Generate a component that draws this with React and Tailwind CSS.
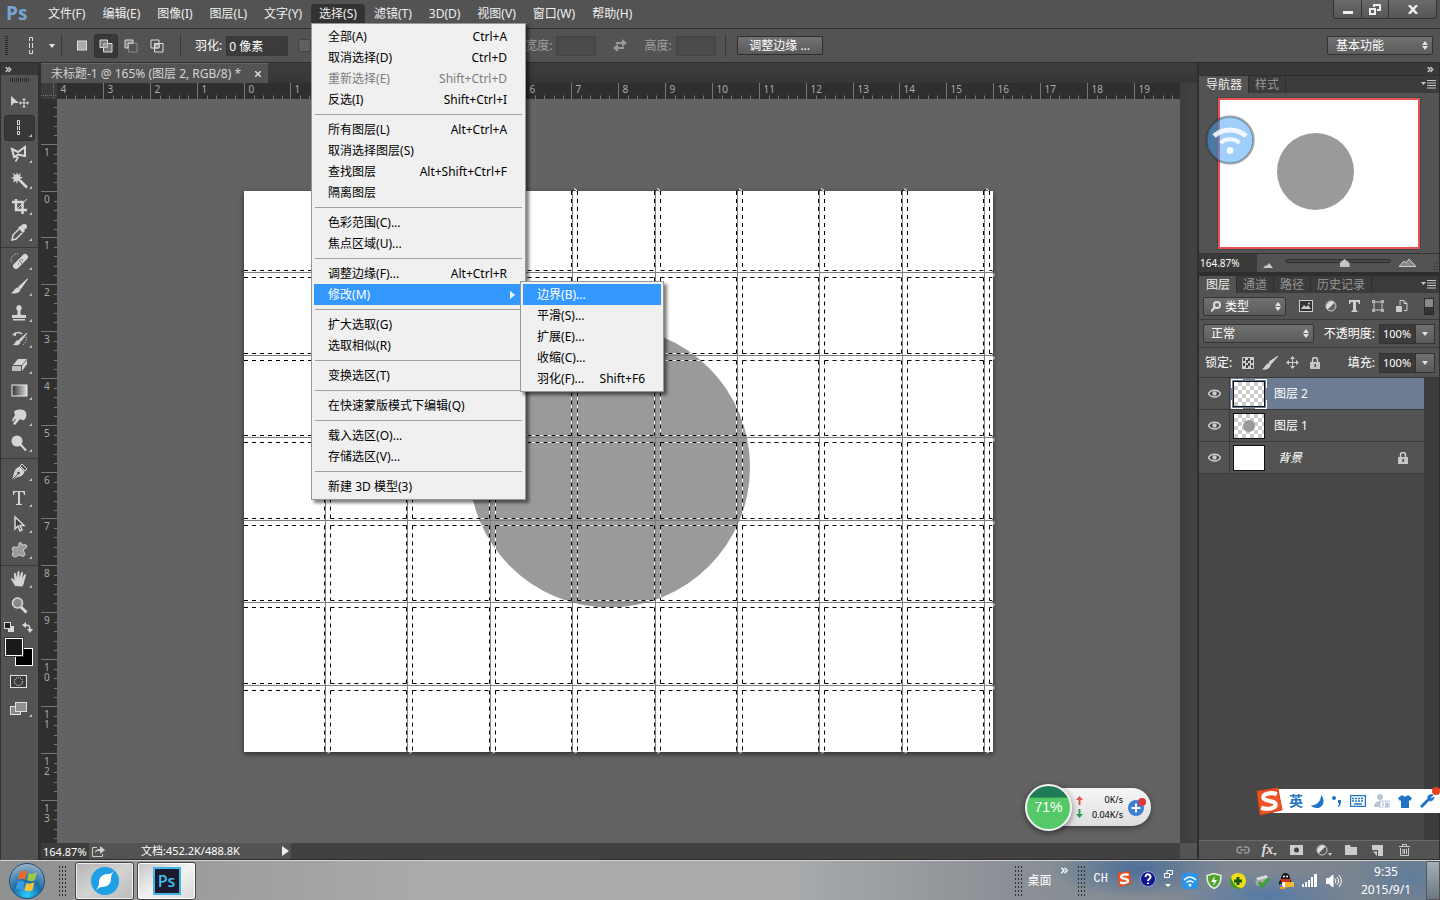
import { useState } from "react";
import { ChevronsRight } from "lucide-react";

const MENUS = ["文件(F)", "编辑(E)", "图像(I)", "图层(L)", "文字(Y)", "选择(S)", "滤镜(T)", "3D(D)", "视图(V)", "窗口(W)", "帮助(H)"];

const SELECT_MENU = [
  [
    { label: "全部(A)", keys: "Ctrl+A" },
    { label: "取消选择(D)", keys: "Ctrl+D" },
    { label: "重新选择(E)", keys: "Shift+Ctrl+D", disabled: true },
    { label: "反选(I)", keys: "Shift+Ctrl+I" },
  ],
  [
    { label: "所有图层(L)", keys: "Alt+Ctrl+A" },
    { label: "取消选择图层(S)" },
    { label: "查找图层", keys: "Alt+Shift+Ctrl+F" },
    { label: "隔离图层" },
  ],
  [{ label: "色彩范围(C)..." }, { label: "焦点区域(U)..." }],
  [
    { label: "调整边缘(F)...", keys: "Alt+Ctrl+R" },
    {
      label: "修改(M)",
      children: [
        { label: "边界(B)...", active: true },
        { label: "平滑(S)..." },
        { label: "扩展(E)..." },
        { label: "收缩(C)..." },
        { label: "羽化(F)...", keys: "Shift+F6" },
      ],
    },
  ],
  [{ label: "扩大选取(G)" }, { label: "选取相似(R)" }],
  [{ label: "变换选区(T)" }],
  [{ label: "在快速蒙版模式下编辑(Q)" }],
  [{ label: "载入选区(O)..." }, { label: "存储选区(V)..." }],
  [{ label: "新建 3D 模型(3)" }],
];

// tool glyphs are drawn on an 18x18 grid
const TOOLS = [
  [
    { name: "移动", plain: true, art: <><path d="M1 3v10l3-3h5z" /><path d="M14 6v8M10 10h8" stroke="currentColor" /><path d="M14 5l2 2h-4zM14 15l2-2h-4zM9 10l2-2v4zM19 10l-2-2v4z" /></> },
    { name: "单列选框", active: true, art: <path d="M7.500 1.500h2v4h-2zM7.500 7v4M9.500 7v4M7.500 12.500h2v3h-2z" fill="none" stroke="currentColor" /> },
    { name: "多边形套索", art: <><path d="M2 4l6 3 7-5v9l-7-1.500-4 2.500z" fill="none" stroke="currentColor" strokeWidth="2" /><path d="M4 11.500l4 1-2.500 4" fill="none" stroke="currentColor" strokeWidth="1.500" /></> },
    { name: "魔棒", art: <><path d="M7 1l1 3 3-2-1 3.500 3 1-3 1.500 1 3-3-1.500L7 13l-1-3-3 1.500 1-3.500-3-1 3-1.500L3 2l3 2z" /><path d="M10 9.500l7 7" stroke="currentColor" strokeWidth="2.500" /></> },
    { name: "裁剪", art: <><path d="M6 2v11h11M2 5h10.500v12" fill="none" stroke="currentColor" strokeWidth="2.500" /><path d="M6 13L17 2" stroke="currentColor" /></> },
    { name: "吸管", art: <><path d="M11 3c2-3 6-2 6 0s-1 3-3 4l1 1-2 2-5-5 2-2z" /><path d="M9 6L3 12l-1 5 4-1 6-6" fill="none" stroke="currentColor" strokeWidth="1.500" /></> },
  ],
  [
    { name: "污点修复画笔", art: <><path d="M6 14l9-9" stroke="currentColor" strokeWidth="6" strokeLinecap="round" /><path d="M8 12h1M10 10h1M12 8h1M9 9h1M11 11h1M10.500 7.500h1" stroke="#555" /><path d="M8 2a6 6 0 0 0-6 9" fill="none" stroke="currentColor" strokeDasharray="1 1" /></> },
    { name: "画笔", art: <><path d="M17.500 1l-7 10-2-2z" stroke="currentColor" /><path d="M8 9.500c3 1 3 3 1 4.500-2 1.500-5 2-8 1 3-1 3-5 7-5.500z" /></> },
    { name: "仿制图章", art: <path d="M9 1a3 3 0 0 1 2 5c-1 1-.5 4 0 5h5v3H2v-3h5c.5-1 1-4 0-5a3 3 0 0 1 2-5zM3 15h12v1.500H3z" /> },
    { name: "历史记录画笔", art: <><path d="M17 3l-6 8-2-1z" stroke="currentColor" /><path d="M8 10c3 1 3 3 1 4.500-2 1-4 1-6 .5 2-1 2-4 5-5z" /><path d="M4 4c3-2 6-2 8 0" fill="none" stroke="currentColor" strokeWidth="1.500" /><path d="M2 5l4-3v4z" /><path d="M16 7c1 4-1 7-4 8" fill="none" stroke="currentColor" strokeDasharray="1 1.500" /></> },
    { name: "橡皮擦", art: <><path d="M8 3h9l-5 6H3z" /><path d="M2 10h9v5H2z" fill="#bdbdbd" /><path d="M12 10l5-6v4l-5 7z" /></> },
    { name: "渐变", art: <rect x="2" y="3" width="15" height="11" fill="url(#toolGradient)" stroke="#eee" /> },
    { name: "涂抹", art: <path d="M4 4c2-3 8-3 11-1 2 2 2 7-1 9-1 .5-3 0-4-1l-5 6-2-1 3-5-1 0-2 3-1-2 3-5z" /> },
    { name: "减淡", art: <><circle cx="7" cy="7" r="5.500" /><path d="M10.500 10.500l5.500 6" stroke="currentColor" strokeWidth="2" /></> },
  ],
  [
    { name: "钢笔", art: <><path d="M12 1l5 5-2 2-5-5z" fill="none" stroke="currentColor" /><path d="M9.500 3.500l5 5c-1 4-4 5-8 6L2 17 3.500 12C4.500 8 5.500 5 9.500 3.500z" /><path d="M2.500 16.500L8 11" stroke="#444" /><circle cx="8.500" cy="10" r="1.300" fill="#444" /></> },
    { name: "横排文字", art: <path d="M3 2h12v4h-1c0-2-1-3-2-3h-2v11c0 1 1 1 2 1v1H6v-1c1 0 2 0 2-1V3H6C5 3 4 4 4 6H3z" /> },
    { name: "路径选择", art: <path d="M5 2v12l3-3 2 5 2-1-2-4.500h4z" fill="#3a3a3a" stroke="currentColor" strokeWidth="1.500" /> },
    { name: "自定形状", art: <path d="M9 2c2-1 3 0 3 2 2 0 4-1 5 1 0 2-3 3-4 4 1 2 3 4 1 6-2 1-3-1-5-1-2 1-4 3-6 1s1-4 0-5c-1-2-1-4 1-4s4 1 5-1z" fill="#9a9a9a" stroke="currentColor" /> },
  ],
  [
    { name: "抓手", art: <path d="M5 16c-1-2-3-5-4-7 0-1 2-1 3 1l.5.500L4 4c0-1.500 2-1.500 2 0l1 4L7.500 2c0-1.500 2-1.500 2 0v6l1.500-5c.5-1.500 2-1 2 .5L12 9l2-4c.5-1 2-1 2 .5L14 12c0 2-1 3-1.500 4.500z" /> },
    { name: "缩放", plain: true, art: <><circle cx="7.500" cy="7" r="5" fill="#8a8a8a" stroke="currentColor" strokeWidth="1.500" /><path d="M11 11l5.500 5.500" stroke="currentColor" strokeWidth="3" /></> },
  ],
];

const LAYERS = [
  { name: "图层 2", kind: "empty" },
  { name: "图层 1", kind: "circle" },
  { name: "背景", kind: "white", locked: true },
];

const UNIT = 46.85; // one centimetre at the current zoom

function ToolButton({ tool }) {
  return (
    <button
      aria-label={tool.name}
      className={`mx-[3px] block h-[26px] w-[31px] rounded-[3px] ${tool.active ? "border border-[#303030] bg-[#383838]" : "border border-transparent"}`}
    >
      <svg width="29" height="24" viewBox="0 0 29 24" fill="#d4d4d4" className="text-[#d8d8d8]">
        <g transform="translate(5 3)">{tool.art}</g>
        {!tool.plain && <path d="M27 18v3h-3z" fill="#c0c0c0" />}
      </svg>
    </button>
  );
}

function Toolbar() {
  return (
    <aside className="flex w-[41px] shrink-0 flex-col border-l border-r-[3px] border-l-[#303030] border-r-[#2f2f2f] bg-[#535353]">
      <div className="flex h-3 shrink-0 items-center bg-[#383838] pl-[3px] text-[#c8c8c8]">
        <ChevronsRight size={9} strokeWidth={4} />
      </div>
      <div className="mx-auto mt-[3px] mb-[7px] h-1 w-5 shrink-0 bg-[repeating-linear-gradient(90deg,#2c2c2c_0_1px,transparent_1px_2px)]" />
      <svg width="0" height="0" className="absolute">
        <linearGradient id="toolGradient">
          <stop offset="0" stopColor="#333" />
          <stop offset="1" stopColor="#ddd" />
        </linearGradient>
      </svg>
      {TOOLS.map((group, i) => (
        <div key={i} className={i > 0 ? "mx-auto mt-[2px] border-t border-[#3a3a3a]" : "mx-auto"}>
          {group.map((tool) => (
            <ToolButton key={tool.name} tool={tool} />
          ))}
        </div>
      ))}
      <div className="flex items-center justify-between px-[3px] pt-1">
        <button aria-label="默认前景色和背景色">
          <svg width="11" height="11" viewBox="0 0 11 11">
            <rect x="4" y="4" width="6" height="6" fill="#d8d8d8" />
            <rect x="0.500" y="0.500" width="6" height="6" fill="#222" stroke="#d8d8d8" />
          </svg>
        </button>
        <button aria-label="切换前景色和背景色" className="mr-[2px]">
          <svg width="11" height="11" viewBox="0 0 11 11" fill="#d8d8d8">
            <path d="M3 3c4 0 5 1 5 5" fill="none" stroke="#d8d8d8" strokeWidth="1.500" />
            <path d="M0 3l4-3v6zM8 11L5 7h6z" />
          </svg>
        </button>
      </div>
      <button aria-label="前景色和背景色" className="mx-[3px] mt-1">
        <svg width="31" height="30" viewBox="0 0 31 30">
          <rect x="11.500" y="11.500" width="17" height="17" fill="#000" stroke="#fff" />
          <rect x="0" y="0" width="20" height="20" fill="#333" />
          <rect x="1.500" y="1.500" width="17" height="17" fill="#1a1a1a" stroke="#fff" />
        </svg>
      </button>
      <button aria-label="以快速蒙版模式编辑" className="mt-2 ml-[9px] self-start">
        <svg width="17" height="13" viewBox="0 0 17 13">
          <rect x="0.500" y="0.500" width="16" height="12" fill="#3c3c3c" stroke="#e0e0e0" />
          <circle cx="8.500" cy="6.500" r="4" fill="none" stroke="#fff" strokeDasharray="1 1" />
        </svg>
      </button>
      <button aria-label="更改屏幕模式" className="mt-[14px] ml-[9px] self-start">
        <svg width="23" height="16" viewBox="0 0 23 16">
          <rect x="0.500" y="4.500" width="10" height="8" fill="#888" stroke="#e0e0e0" />
          <rect x="5.500" y="0.500" width="11" height="9" fill="#909090" stroke="#e0e0e0" />
          <path d="M22 12v3h-3z" fill="#c0c0c0" />
        </svg>
      </button>
    </aside>
  );
}

function MenuRow({ item }) {
  const highlighted = item.active || item.children;
  return (
    <li className="relative">
      <button
        disabled={item.disabled}
        className={`flex h-[21px] w-full items-center justify-between pr-4 pl-[14px] whitespace-nowrap ${
          highlighted ? "bg-[#3399ff] text-white" : item.disabled ? "text-[#7c7c7c]" : "text-black"
        }`}
      >
        <span>{item.label}</span>
        {item.keys && <span>{item.keys}</span>}
        {item.children && (
          <svg width="5" height="8" viewBox="0 0 5 8" className="-mr-2"><path d="M0 0l5 4-5 4z" fill="#fff" /></svg>
        )}
      </button>
      {item.children && (
        <ul className="absolute -top-[3px] left-[206px] z-10 w-36 border border-[#979797] bg-[#f0f0f0] p-[2px] shadow-[3px_3px_3px_rgba(0,0,0,0.5)]">
          {item.children.map((child) => (
            <MenuRow key={child.label} item={child} />
          ))}
        </ul>
      )}
    </li>
  );
}

function SelectMenu() {
  return (
    <div className="absolute top-[19px] left-0 z-20 w-[215px] border border-[#979797] bg-[#f0f0f0] p-[2px] shadow-[3px_3px_3px_rgba(0,0,0,0.5)]">
      {SELECT_MENU.map((group, i) => (
        <ul key={i} className={i > 0 ? "before:mx-px before:my-1 before:block before:h-px before:bg-[#a0a0a0]" : ""}>
          {group.map((item) => (
            <MenuRow key={item.label} item={item} />
          ))}
        </ul>
      ))}
    </div>
  );
}

function MenuBar() {
  return (
    <header className="flex h-[29px] shrink-0 items-start border-b border-[#2e2e2e] bg-[#535353] text-[12px] text-[#f0f0f0]">
      <div className="w-10 pl-[6px] font-['Open_Sans',sans-serif] text-[19px] leading-[26px] font-bold text-[#78a5d6]">Ps</div>
      <nav className="flex gap-px pt-1">
        {MENUS.map((name) => (
          <div key={name} className="relative">
            <button className={`h-[19px] px-2 leading-[19px] whitespace-nowrap ${name === "选择(S)" ? "rounded-t-[3px] bg-[#333]" : ""}`}>{name}</button>
            {name === "选择(S)" && <SelectMenu />}
          </div>
        ))}
      </nav>
      <div className="mr-[3px] ml-auto flex h-[19px] divide-x divide-[#333] rounded-b-[3px] border border-t-0 border-[#333] bg-linear-to-b from-[#6a6a6a] to-[#565656]">
        <button aria-label="最小化" className="flex w-7 items-center justify-center">
          <svg width="10" height="10"><path d="M0 7h10v3H0z" fill="#eee" /></svg>
        </button>
        <button aria-label="还原" className="flex w-[27px] items-center justify-center">
          <svg width="12" height="11" viewBox="0 0 12 11" fill="none" stroke="#eee" strokeWidth="2">
            <path d="M1 5h5v5H1z" /><path d="M5 3V1h6v5H8" />
          </svg>
        </button>
        <button aria-label="关闭" className="flex w-[47px] items-center justify-center">
          <svg width="10" height="9" viewBox="0 0 10 9"><path d="M1 0l8 9M9 0L1 9" stroke="#eee" strokeWidth="2.500" /></svg>
        </button>
      </div>
    </header>
  );
}

function DropDown({ id, label, value, className, pad = "pl-2" }) {
  return (
    <div className={`relative ${className}`}>
      <label htmlFor={id} className="sr-only">{label}</label>
      <select id={id} className={`block h-[19px] w-full appearance-none rounded-[2px] border border-[#333] bg-linear-to-b from-[#707070] to-[#5c5c5c] ${pad} text-[12px] leading-[17px] text-white outline-0`}>
        <option>{value}</option>
      </select>
      <svg width="6" height="9" viewBox="0 0 6 9" fill="#e4e4e4" className="pointer-events-none absolute top-[5px] right-[5px]">
        <path d="M3 0l3 4H0zM3 9l3-4H0z" />
      </svg>
    </div>
  );
}

function OptionsBar() {
  const divider = <div className="h-[23px] w-px bg-[#3a3a3a]" />;
  return (
    <section className="flex h-[34px] shrink-0 items-center border-b border-[#2e2e2e] bg-[#535353] text-[12px] text-white">
      <div className="ml-[5px] h-[19px] w-[3px] bg-[repeating-linear-gradient(#2c2c2c_0_1px,transparent_1px_2px)]" />
      <button aria-label="工具预设" className="mr-[6px] ml-[21px] flex items-center gap-[15px]">
        <svg width="5" height="17" viewBox="0 0 5 17" fill="none" stroke="#ddd">
          <path d="M.5 4V.5h3V4M.5 6v5M3.500 6v5M.5 13v3.500h3V13" />
        </svg>
        <svg width="6" height="4"><path d="M0 0h6L3 4z" fill="#e4e4e4" /></svg>
      </button>
      {divider}
      <div className="mr-[10px] ml-[7px] flex">
        <button aria-label="新选区" className="flex h-6 w-[25px] items-center justify-center">
          <svg width="12" height="12"><rect x="1.500" y="1" width="9" height="9" fill="#aaa" stroke="#ddd" /></svg>
        </button>
        <button aria-label="添加到选区" className="flex h-6 w-6 items-center justify-center rounded-[3px] border border-[#303030] bg-[#383838]">
          <svg width="14" height="14"><path d="M1 1h7.500v3.500H13V13H4.500V8.500H1z" fill="#777" stroke="#ddd" /><path d="M4.500 8.500v-4h4v4z" fill="#999" stroke="#bbb" /></svg>
        </button>
        <button aria-label="从选区减去" className="flex h-6 w-[26px] items-center justify-center">
          <svg width="14" height="14"><path d="M4.500 4.500H13V13H4.500z" fill="none" stroke="#8a8a8a" /><path d="M1 9V1h8v3H4v5z" fill="#777" stroke="#ddd" /></svg>
        </button>
        <button aria-label="与选区交叉" className="flex h-6 w-[26px] items-center justify-center">
          <svg width="14" height="14" fill="none" stroke="#ddd"><path d="M4.500 4.500H13V13H4.500z" /><path d="M1 1h8v8H1z" /><path d="M5 5h4v4H5z" fill="#888" /></svg>
        </button>
      </div>
      {divider}
      <label htmlFor="feather" className="mr-1 ml-[14px]">羽化:</label>
      <input id="feather" defaultValue="0 像素" className="h-[20px] w-[62px] border border-[#383838] bg-[#3b3b3b] pl-[2px] outline-0" />
      <input type="checkbox" aria-label="消除锯齿" disabled className="ml-[10px] size-[13px] appearance-none rounded-[3px] border border-[#444] bg-[#606060]" />
      <div className="ml-[214px] flex items-center text-[#a0a0a0]">
        <label htmlFor="selWidth">宽度:</label>
        <input id="selWidth" disabled className="ml-1 h-5 w-10 border border-[#434343] bg-[#4b4b4b]" />
        <svg width="14" height="13" viewBox="0 0 14 13" fill="#999" className="mx-[17px]">
          <path d="M3 3h6V0l5 4-5 4V5H3zM11 8H5V5L0 9l5 4v-3h6z" />
        </svg>
        <label htmlFor="selHeight">高度:</label>
        <input id="selHeight" disabled className="ml-1 h-5 w-10 border border-[#434343] bg-[#4b4b4b]" />
      </div>
      <div className="ml-[9px]">{divider}</div>
      <button className="ml-[11px] h-[19px] w-[86px] rounded-[2px] border border-[#2e2e2e] bg-linear-to-b from-[#727272] to-[#5a5a5a] leading-[17px]">调整边缘 ...</button>
      <DropDown id="workspace" label="工作区" value="基本功能" className="mr-[7px] ml-auto w-[106px]" />
    </section>
  );
}

function HorizontalRuler() {
  const zero = 187.5;
  const marks = [];
  for (let k = -4; k < 20; k++) marks.push(k);
  return (
    <svg height="16" className="block min-w-0 flex-1 bg-[#2f2f2f] font-['Noto_Sans',sans-serif] text-[10px]" fill="#aaa">
      {marks.map((k) => {
        const x = Math.round(zero + k * UNIT) - 0.5;
        return (
          <g key={k}>
            <path d={`M${x} 0v16`} stroke="#777" />
            {[1, 2, 3, 4].map((n) => (
              <path key={n} d={`M${Math.round(x + (n * UNIT) / 5) + 0.5} 12.500v3.500`} stroke="#777" />
            ))}
            <text x={x + 4} y="10">{Math.abs(k)}</text>
          </g>
        );
      })}
    </svg>
  );
}

function VerticalRuler() {
  const zero = 92.5;
  const marks = [];
  for (let k = -2; k < 14; k++) marks.push(k);
  return (
    <svg width="16" className="block h-full shrink-0 bg-[#2f2f2f] font-['Noto_Sans',sans-serif] text-[10px]" fill="#aaa">
      {marks.map((k) => {
        const y = Math.round(zero + k * UNIT) - 0.5;
        return (
          <g key={k}>
            {k > -2 && <path d={`M0 ${y}h16`} stroke="#777" />}
            {[1, 2, 3, 4].map((n) => (
              <path key={n} d={`M13 ${Math.round(y + (n * UNIT) / 5) + 0.5}h3`} stroke="#777" />
            ))}
            {k > -2 &&
              String(Math.abs(k)).split("").map((digit, n) => (
                <text key={n} x="3" y={y + 11 + n * 10}>{digit}</text>
              ))}
          </g>
        );
      })}
    </svg>
  );
}

// white page with the grey disc, thin grid lines and the marching ants around every cell
function Artboard() {
  const cols = [0, 1, 2, 3, 4, 5, 6, 7, 8].map((n) => Math.round(81 + n * 82.4));
  const rows = [0, 1, 2, 3, 4, 5].map((n) => Math.round(81 + n * 82.6));
  const xs = [-6, ...cols, 760];
  const ys = [-6, ...rows, 570];
  const cells = [];
  for (let c = 0; c < xs.length - 1; c++) {
    for (let r = 0; r < ys.length - 1; r++) {
      const x = xs[c] + 5.5;
      const y = ys[r] + 5.5;
      cells.push({ x, y, w: xs[c + 1] - 0.5 - x, h: ys[r + 1] - 1.5 - y, right: c === xs.length - 2, left: c === 0, top: r === 0, bottom: r === ys.length - 2 });
    }
  }
  const edges = cells
    .map((s) => {
      let d = "";
      if (!s.left) d += `M${s.x} ${Math.max(s.y, 0)}V${Math.min(s.y + s.h, 561)}`;
      if (!s.right) d += `M${s.x + s.w} ${Math.max(s.y, 0)}V${Math.min(s.y + s.h, 561)}`;
      if (!s.top) d += `M${Math.max(s.x, 0)} ${s.y}H${Math.min(s.x + s.w, 748)}`;
      if (!s.bottom) d += `M${Math.max(s.x, 0)} ${s.y + s.h}H${Math.min(s.x + s.w, 748)}`;
      return d;
    })
    .join("");
  const caps =
    cols.map((x) => `M${x - 0.5} 1l2-3h2l2 3M${x - 0.5} 560l2 2h2l2-2`).join("") +
    rows.map((y) => `M748 ${y - 1.5}l2 2v3l-2 2M0 ${y - 1.5}l-2 1`).join("");
  return (
    <svg width="749" height="561" viewBox="0 0 749 561" className="shrink-0 overflow-visible bg-white shadow-[0_2px_5px_rgba(0,0,0,0.55)]">
      <circle cx="365.500" cy="276" r="140.500" fill="#9c9a98" />
      <path d={edges + caps} fill="none" stroke="#fff" />
      <path d={edges + caps} fill="none" stroke="#000" strokeDasharray="4 4" />
      <path d={cols.map((x) => `M${x + 0.5} 0V561`).join("") + rows.map((y) => `M0 ${y + 0.5}H749`).join("")} stroke="#7d7d7d" />
    </svg>
  );
}

function DocumentArea() {
  return (
    <main className="flex min-w-0 flex-1 flex-col bg-[#3a3a3a]">
      <div className="flex h-5 shrink-0 bg-linear-to-b from-[#3d3d3d] to-[#363636]">
        <div className="flex items-center border-t border-[#666] bg-[#535353] pr-[7px] pl-[10px] text-[12px] whitespace-nowrap text-[#d4d4d4]">
          <span>未标题-1 @ 165% (图层 2, RGB/8) *</span>
          <button aria-label="关闭文档" className="ml-[14px]">
            <svg width="6" height="6"><path d="M0 0l6 6M6 0L0 6" stroke="#ddd" strokeWidth="1.500" /></svg>
          </button>
        </div>
      </div>
      <div className="flex min-h-0 flex-1">
        <div className="flex min-w-0 flex-1 flex-col">
          <div className="flex h-4 shrink-0">
            <svg width="16" height="16" className="shrink-0 bg-[#3c3c3c]"><path d="M12.500 0v16M0 12.500h16" stroke="#777" strokeDasharray="1 1" /></svg>
            <HorizontalRuler />
          </div>
          <div className="flex min-h-0 flex-1">
            <VerticalRuler />
            <div className="flex min-w-0 flex-1 items-center justify-center overflow-hidden bg-[#636363]">
              <Artboard />
            </div>
          </div>
        </div>
        <div className="w-[17px] shrink-0 bg-linear-to-r from-[#3c3c3c] to-[#434343]" />
      </div>
      <footer className="flex h-[17px] shrink-0 items-center border-b border-[#2e2e2e] bg-[#414141] text-[11px] text-white">
        <input aria-label="缩放比例" defaultValue="164.87%" className="h-full w-12 bg-[#3c3c3c] pl-[2px] text-[11px] outline-0" />
        <div className="flex h-full items-center bg-[#535353] pr-[2px] pl-[3px]">
          <svg width="13" height="12" viewBox="0 0 13 12" fill="none" stroke="#ccc">
            <path d="M5 2.500H.5v9h10V9" /><path d="M3 8c0-3 2-4 5-4V1l5 4-5 4V6C6 6 4 6 3 8z" fill="#ccc" stroke="none" />
          </svg>
          <span className="ml-9 w-[141px] text-[11px] whitespace-nowrap">文档:452.2K/488.8K</span>
          <button aria-label="状态信息"><svg width="7" height="10"><path d="M0 0l7 5-7 5z" fill="#eee" /></svg></button>
        </div>
        <div className="ml-auto h-full w-[17px] bg-[#535353]" />
      </footer>
    </main>
  );
}

function PanelTabs({ tabs }) {
  return (
    <div className="flex h-[18px] shrink-0 border-t border-[#2e2e2e] bg-[#3b3b3b] text-[12px] leading-[17px]">
      {tabs.map((tab, i) => (
        <button key={tab} className={`border-r border-[#2e2e2e] px-[6px] ${i === 0 ? "bg-[#535353] pl-[7px] text-[#eee]" : "text-[#969696]"}`}>{tab}</button>
      ))}
      <button aria-label="面板菜单" className="mr-[3px] ml-auto">
        <svg width="15" height="9" viewBox="0 0 15 9" fill="#c8c8c8"><path d="M0 2h5L2.500 5zM6 0h9v1H6zM6 2.500h9v1H6zM6 5h9v1H6zM6 7.500h9v1H6z" /></svg>
      </button>
    </div>
  );
}

function Navigator() {
  return (
    <section>
      <PanelTabs tabs={["导航器", "样式"]} />
      <div className="relative flex h-[161px] items-center justify-center border-b border-[#333] bg-[#535353]">
        <svg width="202" height="151" viewBox="0 0 202 151" className="bg-white shadow-[0_0_0_1px_#454545]">
          <circle cx="97.500" cy="73.500" r="38.500" fill="#9c9a98" />
          <rect x="1" y="1" width="200" height="149" fill="none" stroke="#e85252" strokeWidth="2" />
        </svg>
        {/* shared wifi bubble floating over the panel */}
        <svg width="50" height="50" viewBox="0 0 50 50" className="absolute top-[22px] left-[6px]">
          <circle cx="25" cy="25" r="23.500" fill="#3f9ff5" fillOpacity="0.5" stroke="#222" strokeOpacity="0.350" strokeWidth="2.500" />
          <g fill="none" stroke="#fff" strokeOpacity="0.850" strokeWidth="4">
            <path d="M9 21c9-8 23-8 32 0" strokeWidth="5" /><path d="M15.500 28c5-5 14-5 19 0" />
          </g>
          <circle cx="25" cy="35.500" r="3.500" fill="#fff" fillOpacity="0.9" />
        </svg>
      </div>
      <div className="flex h-[18px] items-center bg-[#535353]">
        <input aria-label="导航器缩放" defaultValue="164.87%" className="h-full w-[58px] bg-[#3a3a3a] pl-px text-[10px] text-white outline-0" />
        <svg width="10" height="5" viewBox="0 0 10 5" className="mt-1 ml-[6px]"><path d="M0 5l3-3 1 1 2-3 4 5z" fill="#ccc" /></svg>
        <input
          type="range"
          aria-label="缩放滑块"
          defaultValue="57"
          className="-mt-1 ml-[12px] h-1 w-[106px] appearance-none rounded-full border border-[#303030] bg-[#484848] [&::-webkit-slider-thumb]:mt-1 [&::-webkit-slider-thumb]:h-2 [&::-webkit-slider-thumb]:w-[10px] [&::-webkit-slider-thumb]:appearance-none [&::-webkit-slider-thumb]:bg-[#c4c4c4] [&::-webkit-slider-thumb]:[clip-path:polygon(50%_0,100%_50%,100%_100%,0_100%,0_50%)]"
        />
        <svg width="17" height="8" viewBox="0 0 17 8" className="ml-2"><path d="M0 7.500L5 2l2 2 3-4 7 7.500z" fill="#888" stroke="#ccc" /></svg>
        <svg width="9" height="9" viewBox="0 0 9 9" className="mr-px ml-auto mt-2"><path d="M8 0v9M5.500 3v6M3 6v3" stroke="#222" strokeDasharray="1 2" /></svg>
      </div>
    </section>
  );
}

function PercentField({ id, label }) {
  return (
    <div className="ml-auto flex items-center">
      <label htmlFor={id} className="mr-1 text-[12px] whitespace-nowrap">{label}:</label>
      <input id={id} defaultValue="100%" className="h-5 w-[37px] border border-[#333] bg-[#3b3b3b] pl-[3px] text-[11px] outline-0" />
      <button aria-label={`${label}滑块`} className="flex h-5 w-[19px] items-center justify-center border border-l-0 border-[#333] bg-linear-to-b from-[#707070] to-[#5a5a5a]">
        <svg width="6" height="4"><path d="M0 0h6L3 4z" fill="#e4e4e4" /></svg>
      </button>
    </div>
  );
}

function LockIcon() {
  return (
    <svg width="10" height="12" viewBox="0 0 10 12">
      <path d="M2.500 5V3a2.500 2.500 0 0 1 5 0v2" fill="none" stroke="#d0d0d0" strokeWidth="1.500" />
      <path d="M0 5h10v7H0z" fill="#c4c4c4" />
      <path d="M4.500 7h1.500v3H4.500z" fill="#444" />
    </svg>
  );
}

function LayerThumb({ kind, selected }) {
  return (
    <span className="relative mr-[9px] ml-[3px] block h-[26px] w-[32px] border border-[#111] bg-white">
      {kind !== "white" && <span className="block h-full w-full bg-[conic-gradient(#ccc_25%,#fff_0_50%,#ccc_0_75%,#fff_0)] bg-[length:8px_8px]" />}
      {kind === "circle" && (
        <svg width="12" height="12" className="absolute top-[6px] left-[9px]"><circle cx="6" cy="6" r="6" fill="#9c9a98" /></svg>
      )}
      {selected && (
        <svg width="36" height="30" viewBox="0 0 36 30" fill="none" stroke="#fff" className="absolute -top-[3px] -left-[3px]">
          <path d="M.5 9V.5H12M24 .5h11.500V9M35.500 21v8.500H24M12 29.500H.5V21" />
        </svg>
      )}
    </span>
  );
}

const PanelButton = ({ label, children }) => (
  <button aria-label={label} className="flex w-[27px] items-center justify-center">{children}</button>
);

function Layers() {
  const [selected, setSelected] = useState("图层 2");
  const rule = "border-b border-[#3a3a3a]";
  return (
    <section className="flex min-h-0 flex-1 flex-col border-t-[3px] border-[#2e2e2e] bg-[#474747] text-white">
      <PanelTabs tabs={["图层", "通道", "路径", "历史记录"]} />
      <div className={`flex h-[27px] shrink-0 items-center bg-[#535353] pr-[5px] pl-1 ${rule}`}>
        <div className="relative w-[83px]">
          <DropDown id="filter" label="滤镜类型" value="类型" className="w-full" pad="pl-[21px]" />
          <svg width="10" height="11" viewBox="0 0 10 11" fill="none" stroke="#ddd" strokeWidth="2" className="pointer-events-none absolute top-1 left-2">
            <circle cx="6" cy="4" r="3" /><path d="M3.500 6.500L0 10.500" />
          </svg>
        </div>
        <div className="ml-[13px] flex items-center gap-3">
          <button aria-label="像素图层"><svg width="14" height="12" viewBox="0 0 14 12"><rect x="0.500" y="0.500" width="13" height="11" fill="#333" stroke="#ccc" /><path d="M2 9l3-4 2 2 2-2 3 4z" fill="#ccc" /><circle cx="10" cy="3.500" r="1" fill="#ccc" /></svg></button>
          <button aria-label="调整图层"><svg width="12" height="12" viewBox="0 0 12 12"><circle cx="6" cy="6" r="5" fill="#666" stroke="#ccc" /><path d="M9.500 2.500A5 5 0 0 0 2.500 9.500z" fill="#ddd" /></svg></button>
          <button aria-label="文字图层"><svg width="11" height="12" viewBox="0 0 11 12" fill="#d0d0d0"><path d="M0 0h11v4h-1L9 2H7v8l1.500 1v1h-6v-1L4 10V2H2L1 4H0z" /></svg></button>
          <button aria-label="形状图层"><svg width="12" height="12" viewBox="0 0 12 12" fill="none" stroke="#ccc"><path d="M2 2h8v8H2z" /><path d="M.5.500h2v2h-2zM9.500.500h2v2h-2zM.5 9.500h2v2h-2zM9.500 9.500h2v2h-2z" fill="#535353" /></svg></button>
          <button aria-label="智能对象"><svg width="12" height="12" viewBox="0 0 12 12" fill="none" stroke="#ccc"><path d="M4 5V.5h4l3 3v7H8M8 .5v3h3" /><path d="M.5 6.500h5v5h-5z" fill="#ccc" /></svg></button>
        </div>
        <button aria-label="图层过滤开关" className="ml-auto h-[17px] w-[10px] border border-[#2c2c2c] bg-linear-to-b from-[#8a8a8a] from-50% to-[#333] to-50%" />
      </div>
      <div className={`flex h-7 shrink-0 items-center bg-[#535353] pr-1 pl-1 ${rule}`}>
        <DropDown id="blend" label="混合模式" value="正常" className="w-[111px]" pad="pl-[7px]" />
        <PercentField id="opacity" label="不透明度" />
      </div>
      <div className={`flex h-[30px] shrink-0 items-center bg-[#535353] pr-1 pl-[6px] text-[12px] ${rule}`}>
        <span>锁定:</span>
        <div className="ml-[10px] flex items-center gap-2">
          <button aria-label="锁定透明像素" className="size-[12px] border border-[#ccc] bg-[conic-gradient(#ccc_25%,#444_0_50%,#ccc_0_75%,#444_0)] bg-[length:5px_5px]" />
          <button aria-label="锁定图像像素"><svg width="16" height="14" viewBox="0 0 16 14" fill="#d0d0d0"><path d="M16 0L9 8 7 6z" stroke="#d0d0d0" /><path d="M7 7c3 1 2 3 0 5s-5 2-7 1c3-1 3-5 7-6z" /></svg></button>
          <button aria-label="锁定位置"><svg width="13" height="13" viewBox="0 0 13 13" fill="#ccc"><path d="M6.500 1v11M1 6.500h11" stroke="#ccc" /><path d="M6.500 0L9 3H4zM6.500 13L9 10H4zM0 6.500L3 4v5zM13 6.500L10 4v5z" /></svg></button>
          <button aria-label="锁定全部" className="ml-[3px]"><LockIcon /></button>
        </div>
        <PercentField id="fill" label="填充" />
      </div>
      <div className="flex min-h-0 flex-1">
        <ul className="flex-1">
          {LAYERS.map((layer) => {
            const isSelected = layer.name === selected;
            return (
              <li key={layer.name} className={`flex h-8 bg-[#535353] ${rule}`}>
                <button aria-label={`显示 ${layer.name}`} className="flex w-[31px] items-center justify-center border-r border-[#3a3a3a]">
                  <svg width="13" height="9" viewBox="0 0 13 9">
                    <path d="M.5 4.500C3 0 10 0 12.500 4.500 10 9 3 9 .5 4.500z" fill="#3f3f3f" stroke="#ccc" strokeWidth="1.500" />
                    <circle cx="6.500" cy="4.500" r="2.200" fill="#ccc" />
                  </svg>
                </button>
                <button
                  onClick={() => setSelected(layer.name)}
                  className={`flex flex-1 items-center pr-4 text-[12px] ${isSelected ? "bg-[#6d7c93]" : ""}`}
                >
                  <LayerThumb kind={layer.kind} selected={isSelected} />
                  <span className={layer.locked ? "mr-auto pl-1 italic" : "mr-auto"}>{layer.name}</span>
                  {layer.locked && <LockIcon />}
                </button>
              </li>
            );
          })}
        </ul>
        <div className="w-[15px] shrink-0 bg-[#3c3c3c]" />
      </div>
      <div className="flex h-5 shrink-0 items-center justify-end border-t border-b border-t-[#6a6a6a] border-b-[#2e2e2e] bg-[#535353] pr-[21px]">
        <PanelButton label="链接图层"><svg width="14" height="8" viewBox="0 0 14 8" fill="none" stroke="#999" strokeWidth="1.500"><path d="M6 1H4a3 3 0 0 0 0 6h2M8 1h2a3 3 0 0 1 0 6H8M4 4h6" /></svg></PanelButton>
        <PanelButton label="图层样式"><span className="font-['Liberation_Serif',serif] text-[14px] leading-[14px] font-bold text-[#ddd] italic">fx</span><svg width="4" height="3" className="mt-2"><path d="M0 0h4L2 3z" fill="#ccc" /></svg></PanelButton>
        <PanelButton label="添加蒙版"><svg width="13" height="10"><path d="M0 0h13v10H0z" fill="#ccc" /><circle cx="6.500" cy="5" r="2.500" fill="#444" /></svg></PanelButton>
        <PanelButton label="新建调整图层"><svg width="12" height="12" viewBox="0 0 12 12"><circle cx="6" cy="6" r="5" fill="#555" stroke="#ccc" /><path d="M9.500 2.500A5 5 0 0 0 2.500 9.500z" fill="#ddd" /></svg><svg width="4" height="3" className="mt-2"><path d="M0 0h4L2 3z" fill="#ccc" /></svg></PanelButton>
        <PanelButton label="新建组"><svg width="12" height="10"><path d="M0 0h5l1 2h6v8H0z" fill="#ccc" /></svg></PanelButton>
        <PanelButton label="新建图层"><svg width="11" height="11"><path d="M0 0h11v11H6V5H0z" fill="#ccc" /><path d="M1 6.500h4V11z" fill="#ccc" /></svg></PanelButton>
        <PanelButton label="删除图层"><svg width="11" height="12" viewBox="0 0 11 12" fill="none" stroke="#ccc"><path d="M0 2.500h11M3.500 2V.5h4V2M1.500 4v7.500h8V4M4 5v5M5.500 5v5M7.500 5v5" /></svg></PanelButton>
      </div>
    </section>
  );
}

function NetSpeed() {
  return (
    <div className="absolute right-[289px] bottom-[70px] flex h-[46px] w-[126px] items-center">
      <div className="ml-6 flex h-[38px] flex-1 items-center rounded-r-full bg-linear-to-b from-[#f6f6f6] to-[#dedede] pr-[5px] pl-[27px] text-[9px] leading-[15px] text-black shadow-[0_2px_6px_rgba(0,0,0,0.4)]">
        <svg width="7" height="26" viewBox="0 0 7 26"><path d="M3.500 2l3.500 4H4.500v5h-2V6H0z" fill="#e0524e" /><path d="M3.500 24L0 20h2.500v-5h2v5H7z" fill="#2f9a58" /></svg>
        <div className="ml-auto text-right whitespace-nowrap">
          <p>0K/s</p>
          <p>0.04K/s</p>
        </div>
        <svg width="18" height="20" viewBox="0 0 18 20" className="ml-[5px] shrink-0">
          <circle cx="8" cy="11" r="8" fill="#3c7fd6" /><path d="M8 6.500v9M3.500 11h9" stroke="#fff" strokeWidth="2" /><circle cx="14" cy="5" r="4" fill="#d8383a" />
        </svg>
      </div>
      <div className="absolute top-0 left-0 flex size-[47px] items-center justify-center rounded-full border-2 border-[#f2f2f2] bg-[linear-gradient(#1f7a55_0_26%,#55c968_28%_100%)] font-['Liberation_Sans',sans-serif] text-[14px] text-white shadow-[0_2px_6px_rgba(0,0,0,0.5)]">
        71%
      </div>
    </div>
  );
}

function SogouMark({ size }) {
  return (
    <svg width={size} height={size} viewBox="0 0 28 28">
      <path d="M3 4l20-3 4 21-21 5z" fill="#ee5526" stroke="#d8431a" />
      <path d="M22 7c-5-2-13-1-13 3 0 5 12 2 12 7 0 4-8 5-14 3" fill="none" stroke="#fff" strokeWidth="4" />
    </svg>
  );
}

function ImeBar() {
  return (
    <div className="absolute right-0 bottom-[85px] flex h-7 w-[186px] items-center">
      <div className="z-10 shrink-0"><SogouMark size={29} /></div>
      <div className="-ml-3 flex h-6 flex-1 items-center gap-2 rounded-l-sm bg-white pl-[18px] text-[#1f74c4]">
        <span className="text-[14px] leading-none font-bold">英</span>
        <svg width="13" height="13" viewBox="0 0 13 13" fill="currentColor"><path d="M10 0c5 5 2 13-4 13-3 0-5-1-6-3 6 1 10-4 10-10z" /></svg>
        <svg width="10" height="12" viewBox="0 0 10 12" fill="currentColor"><circle cx="2" cy="3" r="2" /><path d="M6 5h3v3l-2 4H6l1-4H6z" /></svg>
        <svg width="16" height="12" viewBox="0 0 16 12" fill="none" stroke="currentColor"><rect x="0.500" y="0.500" width="15" height="11" strokeWidth="1.500" /><path d="M2 3.500h12M2 6h12" strokeDasharray="2 1" strokeWidth="1.500" /><path d="M4 9h8" strokeWidth="1.500" /></svg>
        <svg width="16" height="14" viewBox="0 0 16 14" fill="#b9c3d6"><circle cx="6" cy="3" r="3" /><path d="M0 13c0-8 12-8 12 0z" /><rect x="6" y="7" width="10" height="7" fill="#fff" stroke="#b9c3d6" /><path d="M9 8.500v4M11 9h3v3.500h-3M11 10.700h3" stroke="#9aa8c4" fill="none" /></svg>
        <svg width="14" height="13" viewBox="0 0 14 13" fill="currentColor"><path d="M4 0c2 2 4 2 6 0l4 3-2 3-1-1v8H3V5L2 6 0 3z" /></svg>
        <svg width="15" height="14" viewBox="0 0 15 14" fill="none" stroke="currentColor"><path d="M1 13l7-7" strokeWidth="3" /><path d="M13 1c-4-1-6 1-5 5 3 2 6 0 6-3l-3 2-1-1z" fill="currentColor" /></svg>
      </div>
      <span className="absolute top-0 right-0 size-2 rounded-full bg-[#e8401c]" />
    </div>
  );
}

function TaskGrip() {
  return <div className="h-8 w-[9px] bg-[radial-gradient(circle,#333_30%,transparent_45%)] bg-[length:3px_4px]" />;
}

function Taskbar() {
  return (
    <footer className="flex h-10 shrink-0 items-center border-t border-[#d4d4d4] bg-[radial-gradient(ellipse_90px_30px_at_79%_20%,#4c6f98,transparent),radial-gradient(ellipse_90px_24px_at_88%_90%,#557aa6,transparent),radial-gradient(ellipse_60px_30px_at_98%_40%,#5f7d9c,transparent),linear-gradient(90deg,#8f9090,#a9abad_30%,#a8aaac_55%,#8b9096_70%,#76818e)] text-white">
      <button aria-label="开始" className="ml-2">
        <svg width="38" height="38" viewBox="0 0 38 38">
          <defs>
            <radialGradient id="orb" cx="0.500" cy="0.900" r="0.900">
              <stop offset="0" stopColor="#2ad0ff" />
              <stop offset="0.450" stopColor="#1b6da8" />
              <stop offset="1" stopColor="#9fb4c6" />
            </radialGradient>
          </defs>
          <circle cx="19" cy="19" r="17.500" fill="url(#orb)" stroke="#1f4b6e" />
          <path d="M12 10c3-2 5-1 7 0l-2 8c-2-1-4-2-7 0z" fill="#f0672a" />
          <path d="M21 11c2 1 5 1 8-1l-2 8c-3 2-6 1-8 0z" fill="#9ccb4a" />
          <path d="M9.500 20c3-2 5-1 7 0l-2 8c-2-1-4-2-7 0z" fill="#3f9be0" />
          <path d="M18.500 21c2 1 5 1 8-1l-2 8c-3 2-6 1-8 0z" fill="#fbc233" />
        </svg>
      </button>
      <div className="ml-3"><TaskGrip /></div>
      <button aria-label="浏览器" className="ml-2 flex h-[38px] w-[59px] items-center justify-center rounded-[3px] border border-[#444] bg-linear-to-br from-[#b4b4b4] via-[#d2d2d2] to-[#bcbcbc] shadow-[inset_0_0_0_1px_#eee]">
        <svg width="28" height="28" viewBox="0 0 28 28"><circle cx="14" cy="14" r="14" fill="#1f9fe6" /><path d="M23 4c-2 3-3 4-3 8 0 5-4 8-9 8-3 0-4 2-6 3 2-3 3-4 3-8 0-5 4-8 9-8 3 0 4-1 6-3z" fill="#fff" /></svg>
      </button>
      <button aria-label="Photoshop" className="ml-[3px] flex h-[38px] w-[59px] items-center justify-center rounded-[3px] border border-[#444] bg-linear-to-br from-[#c4c4c4] via-[#f2f2f2] to-[#d8d8d8] shadow-[inset_0_0_0_1px_#fff]">
        <span className="flex size-7 items-center justify-center border-2 border-[#3fb4e8] bg-[#1c1b2e] font-['Open_Sans',sans-serif] text-[16px] leading-none font-semibold text-[#3fc1f0]">Ps</span>
      </button>
      <div className="ml-auto"><TaskGrip /></div>
      <span className="ml-[5px] text-[12px] whitespace-nowrap">桌面</span>
      <button aria-label="更多桌面项" className="mb-5 ml-[7px]"><ChevronsRight size={11} strokeWidth={3} /></button>
      <div className="ml-[7px]"><TaskGrip /></div>
      <span className="mr-2 mb-1 ml-2 font-['Liberation_Mono',monospace] text-[12px]">CH</span>
      <div className="mb-1 flex items-center gap-2">
        <SogouMark size={16} />
        <svg width="16" height="16" viewBox="0 0 16 16"><circle cx="8" cy="8" r="7.500" fill="#10158a" stroke="#8ea4e0" /><path d="M5.500 6c0-4 5-3 5 0 0 2-2.500 2-2.500 4M8 11.500v1.500" fill="none" stroke="#fff" strokeWidth="2" /></svg>
        <svg width="10" height="18" viewBox="0 0 10 18" fill="none" stroke="#fff"><path d="M.5 3.500h5v4h-5zM3 3V.5h5.500v4H6" /><path d="M1 14h6l-3 3z" fill="#fff" stroke="none" /></svg>
        <svg width="16" height="16" viewBox="0 0 16 16" className="mt-1"><rect width="16" height="16" rx="2" fill="#2a93ea" /><path d="M2 7c4-4 8-4 12 0M4.500 9.500c2-2 5-2 7 0" fill="none" stroke="#fff" strokeWidth="1.500" /><circle cx="8" cy="12" r="1.500" fill="#fff" /></svg>
        <svg width="16" height="16" viewBox="0 0 16 16" className="mt-1"><path d="M8 .5l7 2c0 6-1 10-7 13C2 12.500 1 8.500 1 2.500z" fill="#4da32f" stroke="#e8f0e0" strokeWidth="1.500" /><path d="M9 3L5 9h3l-1 4 4-6H8z" fill="#fff" /></svg>
        <svg width="16" height="16" viewBox="0 0 16 16" className="mt-1"><circle cx="8" cy="8" r="8" fill="#f3dc18" /><path d="M1 4a8 8 0 0 0 11 11C8 15 3 12 1 4z" fill="#3c9c2a" /><path d="M8 4v8M4 8h8" stroke="#175a14" strokeWidth="3" /></svg>
        <svg width="16" height="16" viewBox="0 0 16 16" className="mt-1"><path d="M2 5l10-3 3 3-11 3z" fill="#d8d8d8" /><path d="M1 8l12-3v5L3 13z" fill="#a8a8a8" /><path d="M5 9l3 4 7-8" fill="none" stroke="#37a332" strokeWidth="3" /></svg>
        <svg width="16" height="16" viewBox="0 0 16 16" className="mt-1"><path d="M3 6c0-8 9-8 9 0l2 4-1 1-1-1-2 4H5L3 10l-2 2V9z" fill="#161616" /><ellipse cx="7" cy="11" rx="3" ry="3.500" fill="#fff" /><circle cx="6" cy="3.500" r="1" fill="#fff" /><circle cx="9" cy="3.500" r="1" fill="#fff" /><path d="M3 6h9v3H3z" fill="#d8301f" /><rect x="7" y="9" width="9" height="5" fill="#f4b631" /><path d="M2 14h5v2H2z" fill="#f09a1c" /></svg>
        <svg width="16" height="13" viewBox="0 0 16 13" fill="#fff" className="mt-1"><path d="M0 10h2v3H0zM3 8h2v5H3zM6 6h2v7H6zM9 3h2v10H9zM12 0h3v13h-3z" /></svg>
        <svg width="16" height="14" viewBox="0 0 16 14" fill="none" stroke="#fff" className="mt-1"><path d="M0 4.500h3L7 1v12L3 9.500H0z" fill="#fff" /><path d="M9 4.500c1 2 1 3 0 5M11 3c2 3 2 5 0 8M13 1c3 4 3 8 0 12" /></svg>
      </div>
      <div className="mr-[7px] ml-[11px] w-[66px] text-center text-[12px] leading-[18px]">
        <p>9:35</p>
        <p>2015/9/1</p>
      </div>
      <button aria-label="显示桌面" className="h-full w-[14px] border border-[#555] bg-linear-to-b from-[#a5afba] to-[#6d7782]" />
    </footer>
  );
}

const App = () => {
  return (
    <div className="relative flex h-screen w-full flex-col overflow-hidden bg-[#535353] font-['Noto_Sans','Noto_Sans_CJK_SC',sans-serif]">
      <MenuBar />
      <OptionsBar />
      <div className="flex min-h-0 flex-1">
        <Toolbar />
        <DocumentArea />
        <aside className="flex w-[243px] shrink-0 flex-col border-r border-l-2 border-[#2e2e2e]">
          <div className="flex h-3 shrink-0 items-center justify-end bg-[#383838] pr-1 text-[#c8c8c8]">
            <ChevronsRight size={9} strokeWidth={4} />
          </div>
          <Navigator />
          <Layers />
        </aside>
      </div>
      <Taskbar />
      <NetSpeed />
      <ImeBar />
    </div>
  );
};

export default App;
